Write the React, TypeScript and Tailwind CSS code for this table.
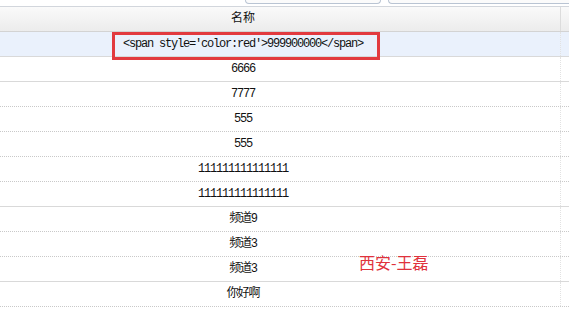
import React from 'react';

type Row = { text: string; line: 'solid' | 'dotted' };

const rows: Row[] = [
  { text: "<span style='color:red'>999900000</span>", line: 'solid' },
  { text: '6666', line: 'solid' },
  { text: '7777', line: 'dotted' },
  { text: '555', line: 'dotted' },
  { text: '555', line: 'dotted' },
  { text: '111111111111111', line: 'dotted' },
  { text: '111111111111111', line: 'solid' },
  { text: '频道9', line: 'dotted' },
  { text: '频道3', line: 'dotted' },
  { text: '频道3', line: 'solid' },
  { text: '你好啊', line: 'dotted' },
];

const GridRow: React.FC<{ row: Row; selected: boolean }> = ({ row, selected }) => (
  <div
    className={`flex h-[25px] border-b ${
      row.line === 'solid' ? 'border-solid border-[#d9d9d9]' : 'border-dotted border-[#c9c9c9]'
    } ${selected ? 'bg-[#eaf1fc]' : 'bg-white'}`}
  >
    <div className="w-[486px] flex items-center justify-center">{row.text}</div>
    <div className="w-[75px] border-r border-dotted border-[#e2e2e2]" />
  </div>
);

export default function App() {
  return (
    <div className="relative w-[569px] h-[309px] overflow-hidden bg-white text-[12px] text-[#111] tracking-[-1.2px] font-['Liberation_Mono','Noto_Sans_CJK_SC',monospace]">
      {/* toolbar edge */}
      <div className="flex h-[7px] pl-[245px] gap-[7px] bg-white border-b border-[#d2d6dc]">
        <div className="w-[136px] h-[4px] border border-t-0 border-[#b9c4d3] rounded-b-[4px] bg-[#fbfbfb]" />
        <div className="flex-1 h-[4px] border border-t-0 border-r-0 border-[#b9c4d3] rounded-bl-[4px] bg-[#fbfbfb]" />
      </div>

      {/* header */}
      <div className="flex h-[25px] bg-gradient-to-b from-[#fafafa] to-[#ececec] border-b border-[#d3d3d3]">
        <div className="w-[486px] flex items-center justify-center tracking-normal">名称</div>
        <div className="w-[75px] border-r border-[#dcdcdc]" />
      </div>

      {rows.map((row, i) => (
        <GridRow key={i} row={row} selected={i === 0} />
      ))}

      {/* annotation */}
      <div className="absolute left-[112px] top-[32px] w-[268px] h-[28px] border-[3px] border-[#e23a3f]" />
      <div className="absolute left-[359px] top-[252px] text-[16px] leading-[20px] tracking-normal text-[#e0323c] font-['Noto_Sans_CJK_SC',sans-serif]">
        西安-王磊
      </div>
    </div>
  );
}
